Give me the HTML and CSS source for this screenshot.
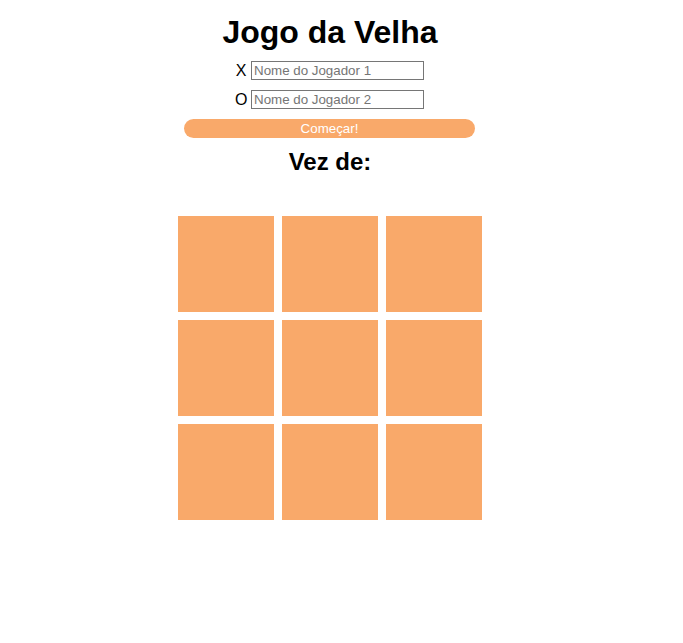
FILE: index.html
```html
<!DOCTYPE html>
<html lang="pt">
<head>
<meta charset="utf-8">
<title>Jogo da Velha</title>
<link rel="stylesheet" href="styles.css">
</head>
<body>
<main class="page">
  <h1 class="title">Jogo da Velha</h1>
  <div class="player-row">
    <label class="mark" for="p1">X</label>
    <input class="name-input" id="p1" type="text" placeholder="Nome do Jogador 1">
  </div>
  <div class="player-row">
    <label class="mark" for="p2">O</label>
    <input class="name-input" id="p2" type="text" placeholder="Nome do Jogador 2">
  </div>
  <button class="start-btn" type="button">Começar!</button>
  <h2 class="turn">Vez de:</h2>
  <div class="board">
    <div class="cell"></div>
    <div class="cell"></div>
    <div class="cell"></div>
    <div class="cell"></div>
    <div class="cell"></div>
    <div class="cell"></div>
    <div class="cell"></div>
    <div class="cell"></div>
    <div class="cell"></div>
  </div>
</main>
</body>
</html>
```
FILE: styles.css
```css
html, body {
  margin: 0;
  padding: 0;
  background: #ffffff;
}

body {
  font-family: "Liberation Sans", Arial, sans-serif;
  color: #000000;
}

.page {
  width: 660px;
  display: flex;
  flex-direction: column;
  align-items: center;
}

.title {
  font-size: 32px;
  line-height: 37px;
  font-weight: bold;
  margin: 14px 0 0;
}

.player-row {
  display: flex;
  align-items: center;
  gap: 4px;
  height: 19px;
  margin-top: 10px;
  margin-right: 1px;
}

.mark {
  width: 12px;
  text-align: center;
  font-size: 16px;
  line-height: 19px;
}

.name-input {
  box-sizing: border-box;
  width: 173px;
  height: 19px;
  border: 1px solid #767676;
  border-radius: 0;
  padding: 1px 2px;
  font-family: "Liberation Sans", Arial, sans-serif;
  font-size: 13.33px;
  color: #000;
  outline: none;
}

.name-input::placeholder {
  color: #757575;
}

.start-btn {
  box-sizing: border-box;
  width: 291px;
  height: 19px;
  margin-top: 10px;
  margin-right: 1px;
  padding: 0;
  border: none;
  border-radius: 10px;
  background: #f9a96a;
  color: #ffffff;
  font-family: "Liberation Sans", Arial, sans-serif;
  font-size: 13.33px;
  line-height: 19px;
}

.turn {
  font-size: 24px;
  line-height: 28px;
  font-weight: bold;
  margin: 10px 0 0;
}

.board {
  display: grid;
  grid-template-columns: repeat(3, 96px);
  grid-auto-rows: 96px;
  gap: 8px;
  margin-top: 40px;
}

.cell {
  background: #f9a96a;
}
```
